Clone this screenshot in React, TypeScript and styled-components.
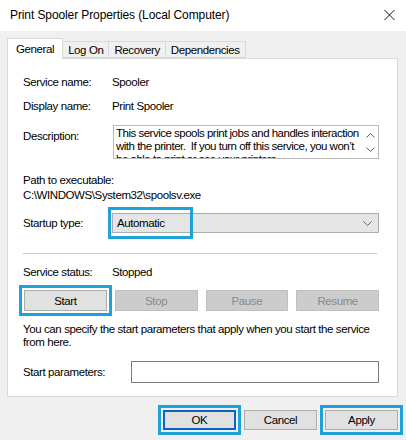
import styled, { createGlobalStyle } from "styled-components";

const GlobalStyle = createGlobalStyle`
  html, body {
    margin: 0;
    padding: 0;
    background: #f0f0f0;
  }
  body {
    font-family: "Liberation Sans", Arial, sans-serif;
    font-size: 11.5px;
    letter-spacing: -0.4px;
    color: #000;
  }
`;

const HIGHLIGHT = "#1ea2dc";

const tabs = ["General", "Log On", "Recovery", "Dependencies"];

const descLines = [
  "This service spools print jobs and handles interaction",
  "with the printer.\u00a0 If you turn off this service, you won’t",
  "be able to print or see your printers.",
];

const App = () => {
  return (
    <Window>
      <GlobalStyle />
      <TitleBar>
        <Title>Print Spooler Properties (Local Computer)</Title>
        <CloseIcon viewBox="0 0 11 10">
          <path d="M0.5 0 L10.5 10 M10.5 0 L0.5 10" />
        </CloseIcon>
      </TitleBar>
      <Body>
        <TabStrip>
          {tabs.map((t, i) => (
            <Tab key={t} $active={i === 0}>
              {t}
            </Tab>
          ))}
        </TabStrip>
        <Panel>
          <Row $mt={0}>
            <Label>Service name:</Label>
            <Value>Spooler</Value>
          </Row>
          <Row $mt={4}>
            <Label>Display name:</Label>
            <Value>Print Spooler</Value>
          </Row>
          <DescRow>
            <DescLabel>Description:</DescLabel>
            <DescBox>
              <DescText>
                {descLines.map((l) => (
                  <DescLine key={l}>{l}</DescLine>
                ))}
              </DescText>
              <ScrollArrows>
                <Chevron viewBox="0 0 9 5">
                  <path d="M0.5 4.5 L4.5 0.5 L8.5 4.5" />
                </Chevron>
                <Chevron viewBox="0 0 9 5">
                  <path d="M0.5 0.5 L4.5 4.5 L8.5 0.5" />
                </Chevron>
              </ScrollArrows>
            </DescBox>
          </DescRow>
          <PathBlock>
            <PathLine>Path to executable:</PathLine>
            <PathLine>C:\WINDOWS\System32\spoolsv.exe</PathLine>
          </PathBlock>
          <Row $mt={10}>
            <Label>Startup type:</Label>
            <Select>
              <span>Automatic</span>
              <Chevron viewBox="0 0 9 5">
                <path d="M0.5 0.5 L4.5 4.5 L8.5 0.5" />
              </Chevron>
              <SelectMark />
            </Select>
          </Row>
          <Separator />
          <Row $mt={8}>
            <Label>Service status:</Label>
            <Value>Stopped</Value>
          </Row>
          <ServiceButtons>
            <Button $marked>Start</Button>
            <Button disabled>Stop</Button>
            <Button disabled>Pause</Button>
            <Button disabled>Resume</Button>
          </ServiceButtons>
          <HelpText>
            You can specify the start parameters that apply when you start the
            service
            <br />
            from here.
          </HelpText>
          <ParamRow>
            <ParamLabel>Start parameters:</ParamLabel>
            <TextInput />
          </ParamRow>
        </Panel>
        <Footer>
          <DialogButton $marked $default>
            OK
          </DialogButton>
          <DialogButton>Cancel</DialogButton>
          <DialogButton $marked>Apply</DialogButton>
        </Footer>
      </Body>
    </Window>
  );
};

export default App;

const Window = styled.div`
  width: 406px;
  height: 440px;
  background: #f0f0f0;
  overflow: hidden;
  display: flex;
  flex-direction: column;
`;

const TitleBar = styled.div`
  height: 31px;
  background: #fff;
  display: flex;
  align-items: center;
  justify-content: space-between;
  padding: 0 11px 1px 10px;
  box-sizing: border-box;
`;

const Title = styled.div`
  font-size: 12px;
  letter-spacing: -0.1px;
`;

const CloseIcon = styled.svg`
  width: 11px;
  height: 10px;
  stroke: #111;
  stroke-width: 1;
  fill: none;
`;

const Body = styled.div`
  padding: 7px 8px 0 7px;
  display: flex;
  flex-direction: column;
`;

const TabStrip = styled.div`
  display: flex;
  align-items: flex-end;
  height: 20px;
  position: relative;
  z-index: 1;
`;

const Tab = styled.div<{ $active?: boolean }>`
  height: ${(p) => (p.$active ? 21 : 17)}px;
  padding: 0 ${(p) => (p.$active ? 8 : 5)}px;
  margin-left: ${(p) => (p.$active ? 0 : -1)}px;
  display: flex;
  align-items: center;
  background: ${(p) => (p.$active ? "#fff" : "#f0f0f0")};
  border: 1px solid #d9d9d9;
  border-bottom: ${(p) => (p.$active ? "none" : "1px solid #d9d9d9")};
  box-sizing: border-box;
  margin-bottom: ${(p) => (p.$active ? -1 : 0)}px;
  position: relative;
  z-index: ${(p) => (p.$active ? 2 : 1)};
`;

const Panel = styled.div`
  height: 339px;
  box-sizing: border-box;
  background: #fff;
  border: 1px solid #d9d9d9;
  padding: 13px 18px 0 15px;
  display: flex;
  flex-direction: column;
`;

const Row = styled.div<{ $mt: number }>`
  display: flex;
  align-items: center;
  height: 20px;
  margin-top: ${(p) => p.$mt}px;
`;

const Label = styled.div`
  width: 89px;
  flex-shrink: 0;
`;

const Value = styled.div``;

const DescRow = styled.div`
  display: flex;
  align-items: flex-start;
  margin-top: 9px;
`;

const DescLabel = styled(Label)`
  margin-top: 5px;
`;

const DescBox = styled.div`
  flex: 1;
  height: 34px;
  box-sizing: border-box;
  border: 1px solid #b9b9b9;
  display: flex;
  overflow: hidden;
  margin-left: 1px;
`;

const DescText = styled.div`
  flex: 1;
  min-width: 0;
  padding: 1px 0 0 2px;
`;

const DescLine = styled.div`
  height: 13px;
  line-height: 13px;
  letter-spacing: -0.5px;
  white-space: nowrap;
  overflow: hidden;
`;

const ScrollArrows = styled.div`
  width: 15px;
  flex-shrink: 0;
  display: flex;
  flex-direction: column;
  align-items: center;
  justify-content: space-between;
  padding: 7px 1px 6px 0;
  box-sizing: border-box;
`;

const Chevron = styled.svg`
  width: 9px;
  height: 5px;
  fill: none;
  stroke: #606060;
  stroke-width: 1;
`;

const PathBlock = styled.div`
  margin-top: 14px;
  display: flex;
  flex-direction: column;
`;

const PathLine = styled.div`
  height: 15px;
  line-height: 15px;
`;

const Select = styled.div`
  flex: 1;
  height: 20px;
  box-sizing: border-box;
  background: #e5e5e5;
  border: 1px solid #acacac;
  display: flex;
  align-items: center;
  justify-content: space-between;
  padding: 0 6px 0 4px;
  position: relative;
`;

const SelectMark = styled.div`
  position: absolute;
  left: -5px;
  top: -7px;
  width: 85px;
  height: 32px;
  box-sizing: border-box;
  border: 3px solid ${HIGHLIGHT};
`;

const Separator = styled.div`
  height: 1px;
  background: #c8c8c8;
  margin: 20px 2px 0 0;
`;

const ServiceButtons = styled.div`
  display: grid;
  grid-template-columns: repeat(4, 1fr);
  gap: 8px;
  margin: 8px 0 0 1px;
`;

const Button = styled.button<{ $marked?: boolean }>`
  height: 21px;
  font: inherit;
  letter-spacing: inherit;
  color: #000;
  background: #e1e1e1;
  border: 1px solid #adadad;
  padding: 0;
  outline: ${(p) => (p.$marked ? `3px solid ${HIGHLIGHT}` : "none")};
  outline-offset: 2px;

  &:disabled {
    color: #8a8a8a;
    background: #cccccc;
    border-color: #bfbfbf;
  }
`;

const HelpText = styled.div`
  margin-top: 12px;
  line-height: 13px;
  white-space: nowrap;
`;

const ParamRow = styled.div`
  display: flex;
  align-items: center;
  margin-top: 12px;
`;

const ParamLabel = styled.div`
  width: 108px;
  flex-shrink: 0;
`;

const TextInput = styled.input`
  flex: 1;
  height: 22px;
  box-sizing: border-box;
  border: 1px solid #7a7a7a;
  background: #fff;
  font: inherit;
`;

const Footer = styled.div`
  display: flex;
  justify-content: flex-end;
  gap: 8px;
  margin-top: 13px;
  padding-right: 0;
`;

const DialogButton = styled(Button)<{ $default?: boolean }>`
  width: 73px;
  height: 20px;
  border: ${(p) => (p.$default ? "2px solid #0a64c8" : "1px solid #adadad")};
`;
